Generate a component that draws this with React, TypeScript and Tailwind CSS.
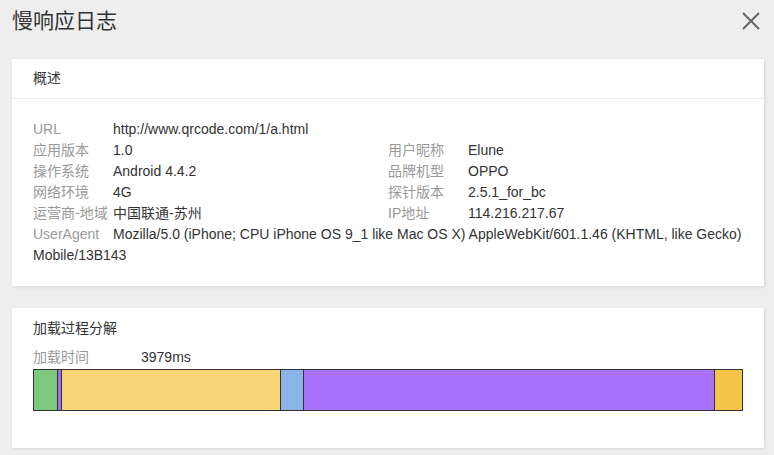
import React from 'react';

const info: Array<[string, string, string?, string?]> = [
  ['应用版本', '1.0', '用户昵称', 'Elune'],
  ['操作系统', 'Android 4.4.2', '品牌机型', 'OPPO'],
  ['网络环境', '4G', '探针版本', '2.5.1_for_bc'],
  ['运营商-地域', '中国联通-苏州', 'IP地址', '114.216.217.67'],
];

const phases = [
  { grow: 23, color: 'bg-[#7dc97f]' },
  { grow: 3, color: 'bg-[#a070f0]' },
  { grow: 220, color: 'bg-[#f7d576]' },
  { grow: 22, color: 'bg-[#89b4ea]' },
  { grow: 414, color: 'bg-[#a771f9]' },
  { grow: 27, color: 'bg-[#f5c54a]' },
];

function Card({ children, className = '' }: { children: React.ReactNode; className?: string }) {
  return (
    <div className={`ml-3 mr-[10px] bg-white shadow-[1px_1px_3px_rgba(0,0,0,0.1)] ${className}`}>
      {children}
    </div>
  );
}

export default function App() {
  return (
    <div
      className="min-h-[455px] w-[774px] bg-[#eeeeee] pb-2 text-[#333]"
      style={{ fontFamily: '"Liberation Sans", "Noto Sans CJK SC", sans-serif' }}
    >
      <div className="flex h-[59px] items-start justify-between pl-3 pr-[13px] pt-[7px]">
        <h1 className="text-[21px] leading-[28px] text-[#333]">慢响应日志</h1>
        <button type="button" className="mt-[4px] text-[#666]">
          <svg width="20" height="20" viewBox="0 0 20 20" fill="none">
            <path d="M2 2L18 18M18 2L2 18" stroke="currentColor" strokeWidth="2" />
          </svg>
        </button>
      </div>

      <Card>
        <div className="flex h-[40px] items-center border-b border-[#ececec] px-[21px] text-[14px] text-[#333]">
          概述
        </div>
        <div className="px-[21px] py-5 text-[14px] leading-[21px]">
          <div className="flex">
            <span className="w-20 shrink-0 text-[#999]">URL</span>
            <span>http://www.qrcode.com/1/a.html</span>
          </div>
          {info.map(([l1, v1, l2, v2]) => (
            <div key={l1} className="grid grid-cols-2">
              <div className="flex">
                <span className="w-20 shrink-0 whitespace-nowrap text-[#999]">{l1}</span>
                <span>{v1}</span>
              </div>
              <div className="flex">
                <span className="w-20 shrink-0 text-[#999]">{l2}</span>
                <span>{v2}</span>
              </div>
            </div>
          ))}
          <div>
            <span className="inline-block w-20 text-[#999]">UserAgent</span>
            Mozilla/5.0 (iPhone; CPU iPhone OS 9_1 like Mac OS X) AppleWebKit/601.1.46 (KHTML, like
            Gecko) Mobile/13B143
          </div>
        </div>
      </Card>

      <Card className="mt-[22px] h-[140px]">
        <div className="px-[21px] pt-[10px] text-[14px] leading-[20px]">
          <div>加载过程分解</div>
          <div className="mt-[9px] flex">
            <span className="w-[108px] text-[#999]">加载时间</span>
            <span>3979ms</span>
          </div>
          <div className="mt-[2px] flex h-[42px] border border-[#333]">
            {phases.map((p, i) => (
              <div
                key={i}
                className={`${p.color} ${i < phases.length - 1 ? 'border-r border-[#333]' : ''}`}
                style={{ flexGrow: p.grow, flexBasis: 0 }}
              />
            ))}
          </div>
        </div>
      </Card>
    </div>
  );
}
